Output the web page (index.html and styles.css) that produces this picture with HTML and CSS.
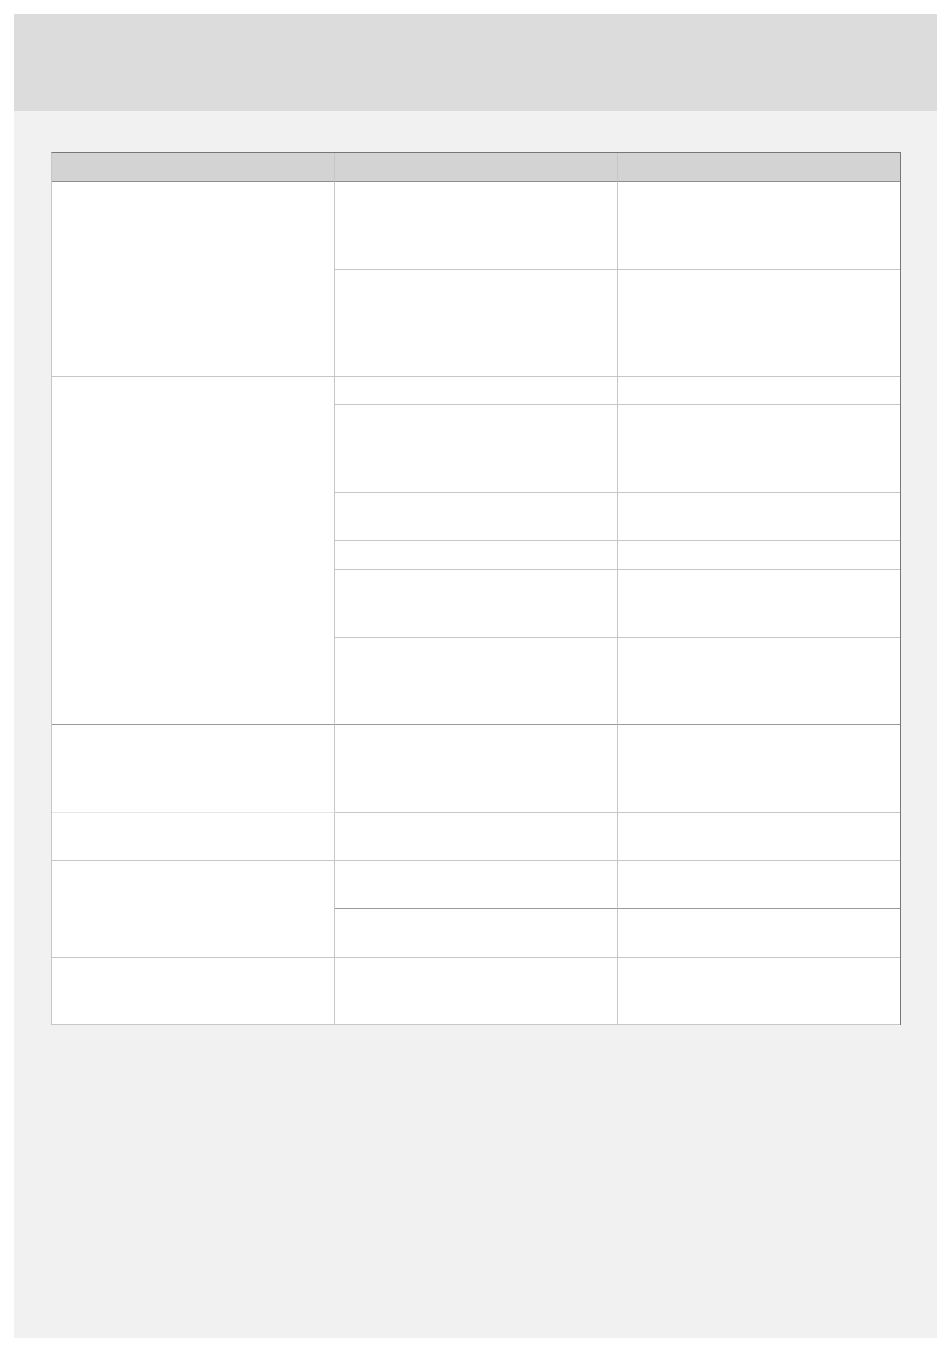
FILE: index.html
```html
<!DOCTYPE html>
<html lang="en">
<head>
    <meta charset="UTF-8">
    <meta name="viewport" content="width=device-width, initial-scale=1.0">
    <title>Table</title>
    <link rel="stylesheet" href="styles.css">
</head>
<body>
    <div class="page">
        <div class="page-header"></div>

        <div class="page-body">
            <div class="grid-table">
                <!-- header -->
                <div class="cell head"></div>
                <div class="cell head"></div>
                <div class="cell head last"></div>

                <!-- group 1 -->
                <div class="cell span-2"></div>
                <div class="cell"></div>
                <div class="cell last"></div>
                <div class="cell"></div>
                <div class="cell last"></div>

                <!-- group 2 -->
                <div class="cell span-6 line-dark"></div>
                <div class="cell"></div>
                <div class="cell last"></div>
                <div class="cell"></div>
                <div class="cell last"></div>
                <div class="cell"></div>
                <div class="cell last"></div>
                <div class="cell"></div>
                <div class="cell last"></div>
                <div class="cell"></div>
                <div class="cell last"></div>
                <div class="cell line-dark"></div>
                <div class="cell last line-dark"></div>

                <!-- single rows -->
                <div class="cell line-light"></div>
                <div class="cell"></div>
                <div class="cell last"></div>

                <div class="cell"></div>
                <div class="cell"></div>
                <div class="cell last"></div>

                <!-- group 3 -->
                <div class="cell span-2"></div>
                <div class="cell line-dark"></div>
                <div class="cell last line-dark"></div>
                <div class="cell"></div>
                <div class="cell last"></div>

                <div class="cell"></div>
                <div class="cell"></div>
                <div class="cell last"></div>
            </div>
        </div>
    </div>
</body>
</html>
```

FILE: styles.css
```css
body {
    margin: 0;
    padding: 14px 13px 15px 14px;
    background-color: #fff;
    font-family: "Liberation Sans", Arial, sans-serif;
}

.page {
    width: 923px;
    height: 1324px;
    background-color: #f1f1f1;
}

.page-header {
    height: 97px;
    background-color: #dcdcdc;
}

.page-body {
    padding: 41px 0 0 37px;
}

.grid-table {
    display: grid;
    box-sizing: border-box;
    width: 850px;
    grid-template-columns: 283px 283px 1fr;
    grid-template-rows: 29px 88px 107px 28px 88px 48px 29px 68px 87px 88px 48px 48px 49px 67px;
    border-top: 1px solid #777;
    border-right: 1px solid #777;
    border-left: 1px solid #c6c6c6;
    background-color: #fff;
}

.cell {
    box-sizing: border-box;
    border-right: 1px solid #c6c6c6;
    border-bottom: 1px solid #c6c6c6;
}

.cell.last {
    border-right: none;
}

.cell.head {
    background-color: #d3d3d3;
    border-bottom: 1px solid #8e8e8e;
}

.cell.span-2 {
    grid-row: span 2;
}

.cell.span-6 {
    grid-row: span 6;
}

.cell.line-dark {
    border-bottom-color: #9a9a9a;
}

.cell.line-light {
    border-bottom-color: #e6e6e6;
}
```
